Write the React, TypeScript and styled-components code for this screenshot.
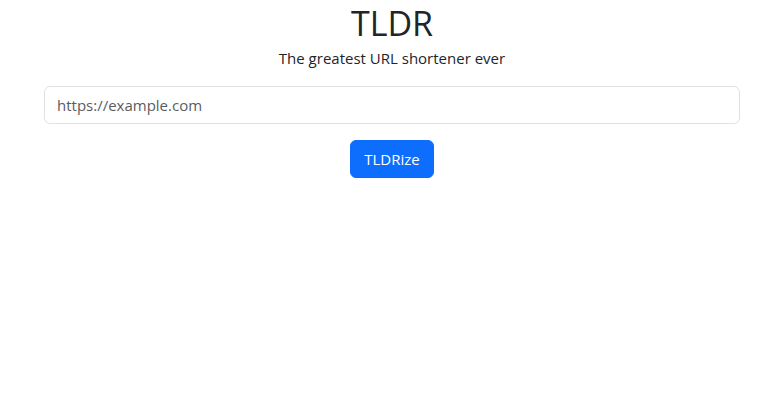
import styled, { createGlobalStyle } from "styled-components";
import { useState } from "react";

const GlobalStyle = createGlobalStyle`
  body {
    margin: 0;
    background: #ffffff;
    color: #212529;
    font-family: "Open Sans", "Noto Sans", sans-serif;
    font-size: 16px;
    line-height: 1.5;
  }
  * {
    box-sizing: border-box;
  }
`;

export default function App() {
  const [url, setUrl] = useState("");

  return (
    <>
      <GlobalStyle />
      <Container>
        <Title>TLDR</Title>
        <Lead>The greatest URL shortener ever</Lead>
        <Form onSubmit={(e) => e.preventDefault()}>
          <UrlInput
            type="text"
            placeholder="https://example.com"
            value={url}
            onChange={(e) => setUrl(e.target.value)}
          />
          <SubmitButton type="submit">TLDRize</SubmitButton>
        </Form>
      </Container>
    </>
  );
}

const Container = styled.div`
  max-width: 720px;
  margin: 0 auto;
  padding: 0 11px 0 13px;
  text-align: center;
`;

const Title = styled.h1`
  font-size: 34px;
  font-weight: 400;
  line-height: 46px;
  margin: 0 0 1px;
`;

const Lead = styled.p`
  font-size: 15px;
  margin: 0 0 16px;
`;

const Form = styled.form`
  display: flex;
  flex-direction: column;
  align-items: center;
  gap: 16px;
`;

const UrlInput = styled.input`
  width: 100%;
  height: 38px;
  padding: 6px 12px;
  font-family: inherit;
  font-size: 15px;
  color: #212529;
  background: #ffffff;
  border: 1px solid #dee2e6;
  border-radius: 6px;
  outline: none;

  &::placeholder {
    color: #595c5f;
  }
`;

const SubmitButton = styled.button`
  height: 38px;
  padding: 6px 13px;
  font-family: inherit;
  font-size: 15px;
  color: #ffffff;
  background: #0d6efd;
  border: 1px solid #0d6efd;
  border-radius: 6px;
  cursor: pointer;
`;
